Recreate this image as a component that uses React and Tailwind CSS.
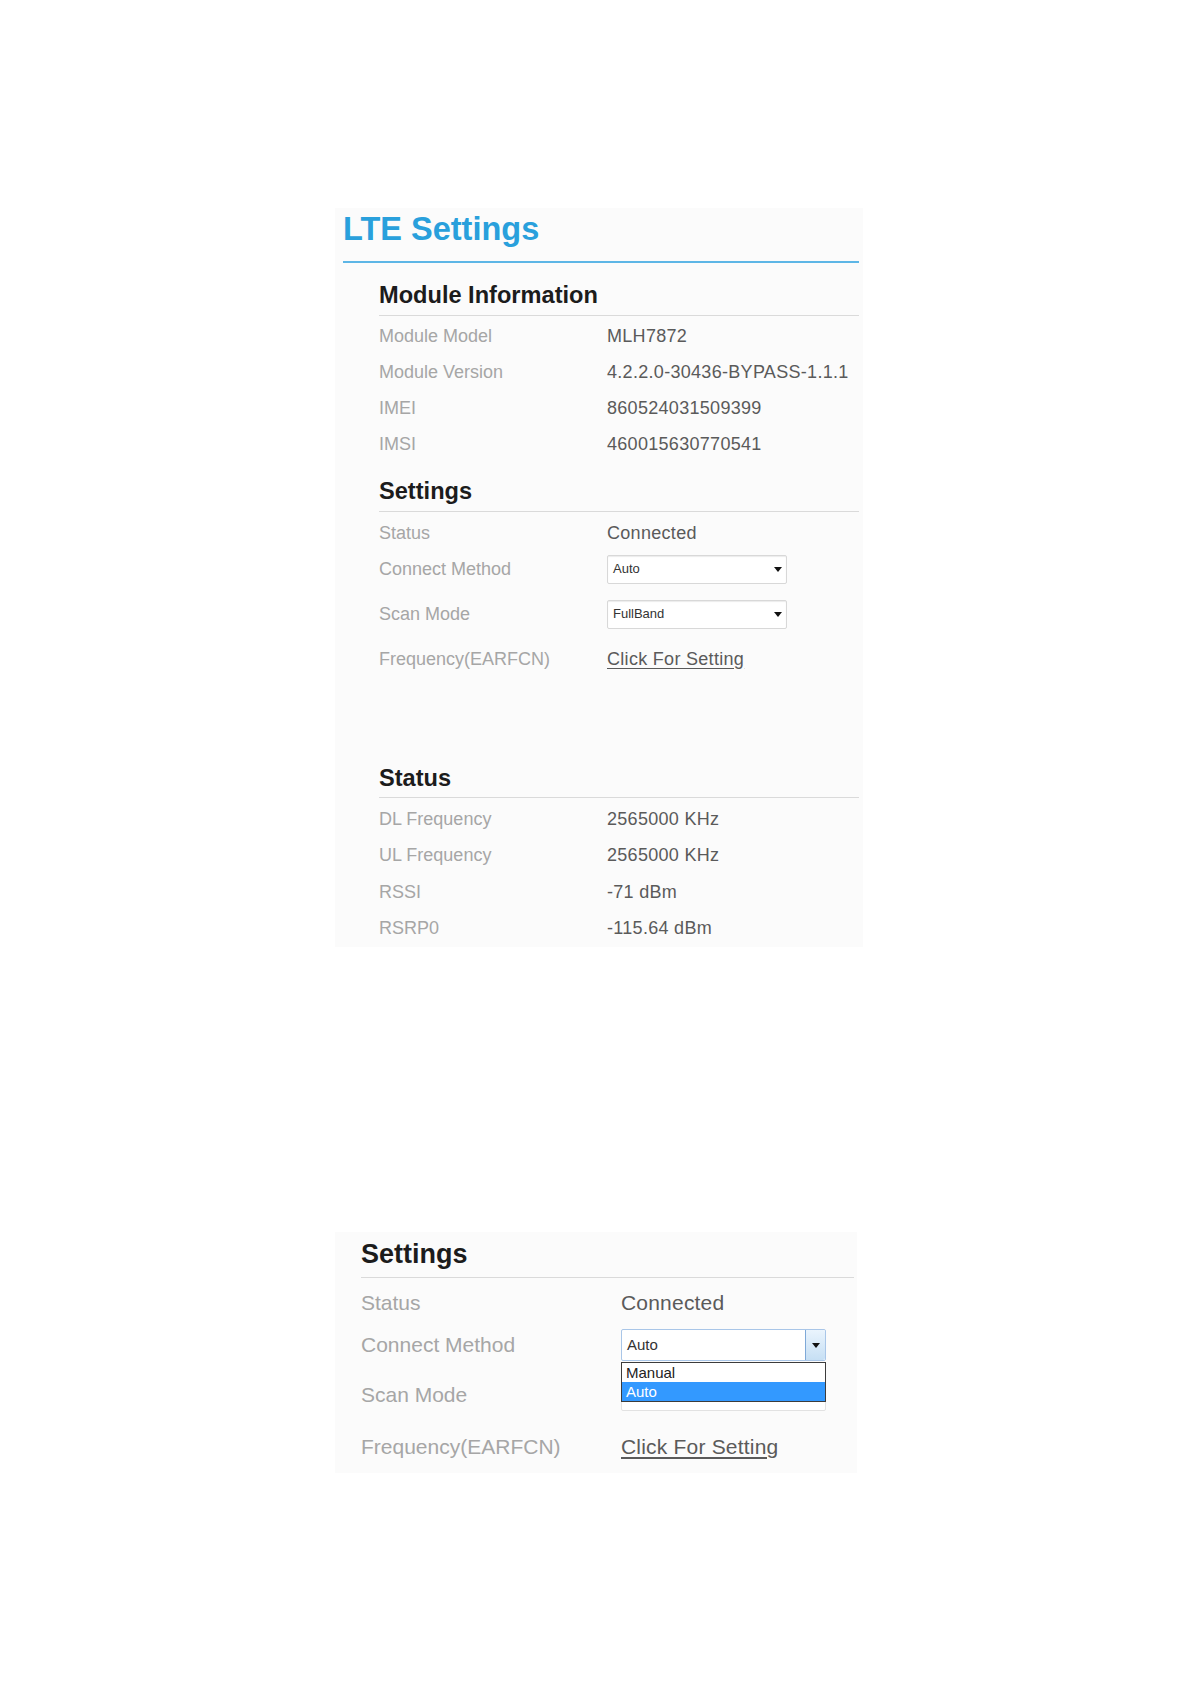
import React from 'react';

const font = { fontFamily: '"Liberation Sans", Arial, sans-serif' };

const Arrow = () => (
  <svg width="8" height="5" viewBox="0 0 8 5" className="shrink-0">
    <path d="M0 0 L8 0 L4 5 Z" fill="#111" />
  </svg>
);

const Heading = ({ children, cls }) => (
  <div className={`font-bold text-[#1c1c1c] border-b border-[#dadada] ${cls}`}>{children}</div>
);

const Row = ({ label, children, h = 'h-[36px]', extra = '' }) => (
  <div className={`flex items-center ${h} ${extra}`}>
    <div className="w-[228px] shrink-0 text-[18px] text-[#a6a6a6]">{label}</div>
    <div className="text-[18px] text-[#5a5a5a] tracking-[0.3px]">{children}</div>
  </div>
);

const SmallSelect = ({ value }) => (
  <div className="w-[180px] h-[29px] bg-white border border-[#d8d8d8] rounded-[2px] shadow-[inset_0_1px_1px_rgba(0,0,0,0.08)] flex items-center justify-between pl-[5px] pr-[4px]">
    <span className="text-[13px] text-[#333] tracking-normal">{value}</span>
    <Arrow />
  </div>
);

const Row2 = ({ label, children, h = 'h-[42px]', extra = '' }) => (
  <div className={`flex items-center ${h} ${extra}`}>
    <div className="w-[260px] shrink-0 text-[21px] text-[#a6a6a6]">{label}</div>
    <div className="text-[21px] text-[#5a5a5a] tracking-[0.2px]">{children}</div>
  </div>
);

export default function App() {
  return (
    <div className="min-h-[1684px] bg-white pt-[208px] pl-[335px]" style={font}>
      {/* LTE settings panel */}
      <div className="w-[528px] bg-[#fbfbfb] pt-[1px] pb-[1px]">
        <div className="ml-[8px] mr-[4px] border-b-2 border-[#5db6e6] pb-[12px]">
          <h1 className="text-[32.5px] leading-[40px] font-bold text-[#29a0dc]">LTE Settings</h1>
        </div>

        <div className="ml-[44px] mr-[4px]">
          <Heading cls="mt-[17px] text-[23.6px] leading-[30px] pb-[5px]">Module Information</Heading>
          <div className="pt-[2px]">
            <Row label="Module Model">MLH7872</Row>
            <Row label="Module Version">4.2.2.0-30436-BYPASS-1.1.1</Row>
            <Row label="IMEI">860524031509399</Row>
            <Row label="IMSI">460015630770541</Row>
          </div>

          <Heading cls="mt-[14px] text-[23.6px] leading-[30px] pb-[5px]">Settings</Heading>
          <div className="pt-[3px]">
            <Row label="Status">Connected</Row>
            <Row label="Connect Method"><SmallSelect value="Auto" /></Row>
            <Row label="Scan Mode" extra="mt-[9px]"><SmallSelect value="FullBand" /></Row>
            <Row label="Frequency(EARFCN)" extra="mt-[9px]">
              <span className="underline underline-offset-[3px]">Click For Setting</span>
            </Row>
          </div>

          <Heading cls="mt-[86px] text-[23.6px] leading-[30px] pb-[4px]">Status</Heading>
          <div className="pt-[3px]">
            <Row label="DL Frequency">2565000 KHz</Row>
            <Row label="UL Frequency" h="h-[37px]">2565000 KHz</Row>
            <Row label="RSSI">-71 dBm</Row>
            <Row label="RSRP0">-115.64 dBm</Row>
          </div>
        </div>
      </div>

      {/* Settings panel with open drop-down */}
      <div className="mt-[285px] w-[522px] bg-[#fbfbfb] pt-[5px] pb-[5px]">
        <div className="ml-[26px] mr-[3px]">
          <Heading cls="text-[27px] leading-[34px] pb-[6px]">Settings</Heading>
          <div className="pt-[4px]">
            <Row2 label="Status">Connected</Row2>
            <Row2 label="Connect Method">
              <div className="relative">
                <div className="w-[205px] h-[32px] bg-white border border-[#a9c6e8] rounded-[2px] flex items-stretch">
                  <span className="flex-1 flex items-center pl-[5px] text-[15px] text-[#333] tracking-normal">Auto</span>
                  <div className="w-[20px] border-l border-[#7fa9d8] bg-gradient-to-b from-[#eaf4fd] to-[#c6dff4] flex items-center justify-center rounded-r-[2px]">
                    <Arrow />
                  </div>
                </div>
                <div className="absolute left-0 top-[33px] z-10 w-[205px] bg-white border border-[#3c3c3c] text-[15px] tracking-normal leading-[19px]">
                  <div className="pl-[4px] text-[#222]">Manual</div>
                  <div className="pl-[4px] bg-[#3399ff] text-white">Auto</div>
                </div>
              </div>
            </Row2>
            <Row2 label="Scan Mode" extra="mt-[8px]">
              <div className="w-[205px] h-[32px] bg-white border border-[#e2e2e2] rounded-[2px]" />
            </Row2>
            <Row2 label="Frequency(EARFCN)" extra="mt-[10px]">
              <span className="underline underline-offset-[3px]">Click For Setting</span>
            </Row2>
          </div>
        </div>
      </div>
    </div>
  );
}
